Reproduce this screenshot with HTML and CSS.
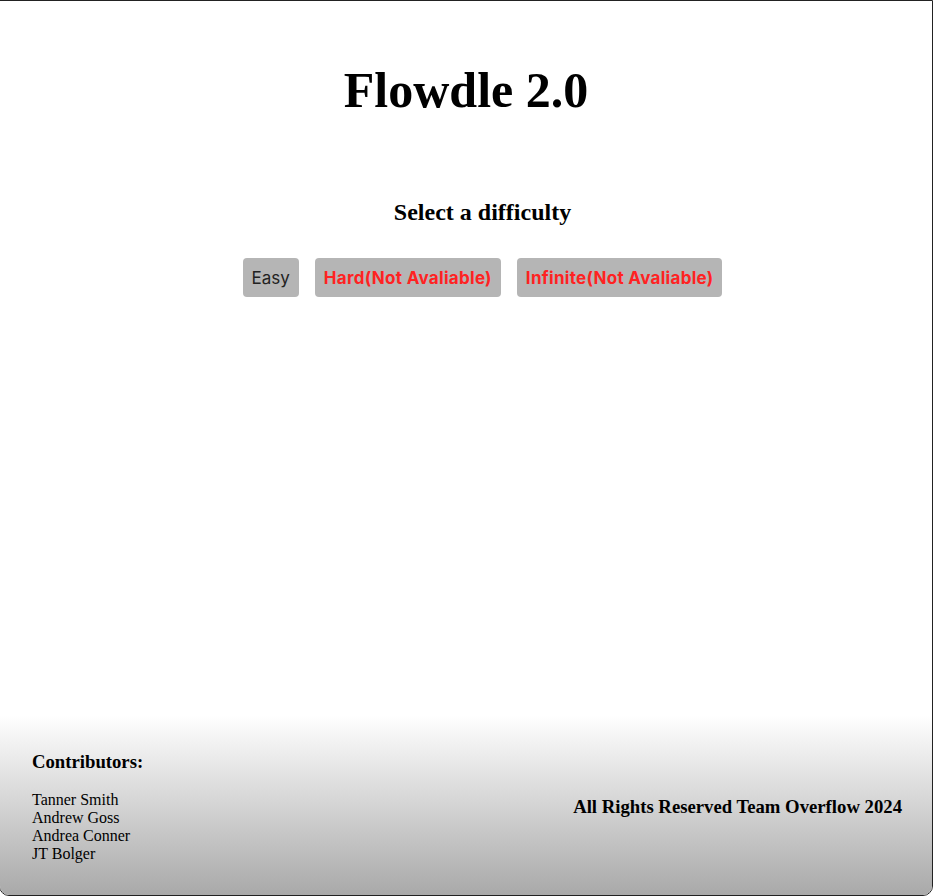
FILE: index.html
```html
<!DOCTYPE html>
<html lang="en">
<head>
<meta charset="utf-8">
<title>Flowdle 2.0</title>
<link rel="stylesheet" href="styles.css">
</head>
<body>
<div class="page">
  <main class="main">
    <h1 class="title">Flowdle 2.0</h1>
    <section class="picker">
      <h2 class="subtitle">Select a difficulty</h2>
      <div class="buttons">
        <button class="btn">Easy</button>
        <button class="btn btn-off">Hard(Not Avaliable)</button>
        <button class="btn btn-off">Infinite(Not Avaliable)</button>
      </div>
    </section>
  </main>
  <footer class="footer">
    <div class="contrib">
      <h3 class="contrib-title">Contributors:</h3>
      <p class="names">Tanner Smith<br>Andrew Goss<br>Andrea Conner<br>JT Bolger</p>
    </div>
    <h3 class="rights">All Rights Reserved Team Overflow 2024</h3>
  </footer>
</div>
</body>
</html>
```

FILE: styles.css
```css
html, body {
  margin: 0;
  padding: 0;
  background: #fff;
}
body {
  font-family: "Liberation Serif", "Times New Roman", serif;
  color: #000;
}
.page {
  box-sizing: border-box;
  width: 934px;
  height: 896px;
  margin-left: -1px;
  border: 1px solid #222;
  border-radius: 0 0 10px 10px;
  overflow: hidden;
  display: flex;
  flex-direction: column;
}
.main {
  flex: 1;
  display: flex;
  flex-direction: column;
  align-items: center;
}
.title {
  font-size: 50px;
  font-weight: bold;
  margin: 60px 0 0;
}
.picker {
  display: flex;
  flex-direction: column;
  align-items: center;
  padding-left: 33px;
}
.subtitle {
  font-size: 24px;
  font-weight: bold;
  margin: 80px 0 0;
}
.buttons {
  display: flex;
  gap: 16px;
  margin-top: 32px;
}
.btn {
  font-family: Inter, "Noto Sans", sans-serif;
  font-size: 17px;
  height: 39px;
  padding: 0 9px;
  border: none;
  border-radius: 4px;
  background: #b5b5b5;
  color: #222;
}
.btn-off {
  color: #ff2222;
  font-weight: bold;
  letter-spacing: 0.3px;
}
.footer {
  height: 180px;
  box-sizing: border-box;
  padding: 4px 30px 0 32px;
  background: linear-gradient(to bottom, #fff, #a9a9a9);
  display: flex;
  justify-content: space-between;
  align-items: center;
}
.contrib-title {
  font-size: 18.72px;
  margin: 0 0 18px;
}
.names {
  margin: 0;
  font-size: 16px;
  line-height: 18px;
}
.rights {
  font-size: 18.72px;
  margin: 0;
}
```
